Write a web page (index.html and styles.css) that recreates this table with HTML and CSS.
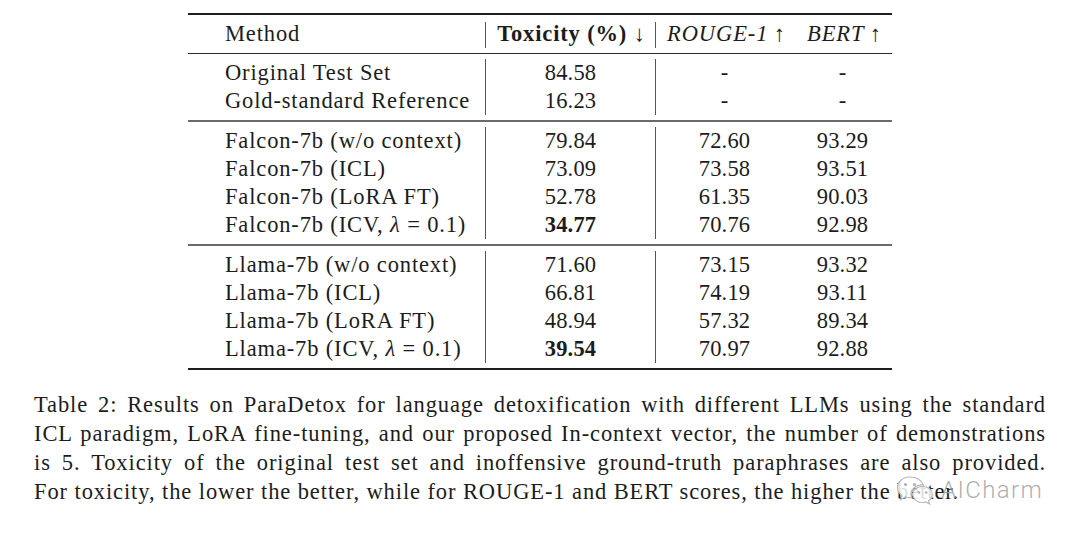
FILE: index.html
```html
<!DOCTYPE html>
<html>
<head>
<meta charset="utf-8">
<link rel="stylesheet" href="styles.css">
</head>
<body>
<div class="page">
  <div class="table">
    <div class="rule thick"></div>
    <div class="group head">
      <div class="row">
        <div class="c m">Method</div>
        <div class="c t"><b>Toxicity (%)</b>&nbsp;↓</div>
        <div class="c r"><i>ROUGE-1</i>&#8201;↑</div>
        <div class="c b"><i>BERT</i>&#8201;↑</div>
      </div>
    </div>
    <div class="rule thin"></div>
    <div class="group">
      <div class="row"><div class="c m">Original Test Set</div><div class="c t num">84.58</div><div class="c r num">-</div><div class="c b num">-</div></div>
      <div class="row"><div class="c m">Gold-standard Reference</div><div class="c t num">16.23</div><div class="c r num">-</div><div class="c b num">-</div></div>
    </div>
    <div class="rule mid"></div>
    <div class="group">
      <div class="row"><div class="c m">Falcon-7b (w/o context)</div><div class="c t num">79.84</div><div class="c r num">72.60</div><div class="c b num">93.29</div></div>
      <div class="row"><div class="c m">Falcon-7b (ICL)</div><div class="c t num">73.09</div><div class="c r num">73.58</div><div class="c b num">93.51</div></div>
      <div class="row"><div class="c m">Falcon-7b (LoRA FT)</div><div class="c t num">52.78</div><div class="c r num">61.35</div><div class="c b num">90.03</div></div>
      <div class="row"><div class="c m">Falcon-7b (ICV, <i class="lam">λ</i> = 0.1)</div><div class="c t num"><b>34.77</b></div><div class="c r num">70.76</div><div class="c b num">92.98</div></div>
    </div>
    <div class="rule mid"></div>
    <div class="group">
      <div class="row"><div class="c m">Llama-7b (w/o context)</div><div class="c t num">71.60</div><div class="c r num">73.15</div><div class="c b num">93.32</div></div>
      <div class="row"><div class="c m">Llama-7b (ICL)</div><div class="c t num">66.81</div><div class="c r num">74.19</div><div class="c b num">93.11</div></div>
      <div class="row"><div class="c m">Llama-7b (LoRA FT)</div><div class="c t num">48.94</div><div class="c r num">57.32</div><div class="c b num">89.34</div></div>
      <div class="row"><div class="c m">Llama-7b (ICV, <i class="lam">λ</i> = 0.1)</div><div class="c t num"><b>39.54</b></div><div class="c r num">70.97</div><div class="c b num">92.88</div></div>
    </div>
    <div class="rule thick"></div>
  </div>

  <div class="caption">
    <div class="line">Table 2: Results on ParaDetox for language detoxification with different LLMs using the standard</div>
    <div class="line">ICL paradigm, LoRA fine-tuning, and our proposed In-context vector, the number of demonstrations</div>
    <div class="line">is 5. Toxicity of the original test set and inoffensive ground-truth paraphrases are also provided.</div>
    <div class="line last">For toxicity, the lower the better, while for ROUGE-1 and BERT scores, the higher the better.</div>
    <div class="watermark">
      <svg class="wx" width="38" height="32" viewBox="0 0 38 32">
        <path d="M14 3 C6.5 3 1.5 8 1.5 13.5 C1.5 16.8 3.3 19.6 6 21.4 L4.8 25.5 L9.6 23 C11 23.5 12.5 23.7 14 23.7 C14.6 23.7 15.2 23.7 15.8 23.6 C15.4 22.6 15.2 21.5 15.2 20.4 C15.2 14.9 20.4 10.6 26.6 10.6 C26.8 10.6 27 10.6 27.2 10.6 C26 6.2 20.6 3 14 3 Z" />
        <path d="M26.6 12.3 C20.9 12.3 16.8 16 16.8 20.4 C16.8 24.8 20.9 28.5 26.6 28.5 C27.8 28.5 28.9 28.3 29.9 28 L33.6 30 L32.6 26.6 C34.8 25.1 36.3 22.9 36.3 20.4 C36.3 16 32.2 12.3 26.6 12.3 Z" />
        <circle class="eye" cx="9.5" cy="10.5" r="1.6"/>
        <circle class="eye" cx="18.5" cy="10.5" r="1.6"/>
        <circle class="eye" cx="23" cy="18.5" r="1.3"/>
        <circle class="eye" cx="30.2" cy="18.5" r="1.3"/>
      </svg>
      <span class="wm-text">AICharm</span>
    </div>
  </div>
</div>
</body>
</html>
```
FILE: styles.css
```css
html, body {
  margin: 0;
  padding: 0;
  background: #ffffff;
}

.page {
  width: 1080px;
  height: 537px;
  display: flex;
  flex-direction: column;
  align-items: center;
  font-family: "Liberation Serif", "Times New Roman", serif;
  color: #1c1c1c;
  font-size: 22.5px;
}

.table {
  width: 704px;
  margin-top: 13px;
  display: flex;
  flex-direction: column;
}

.rule { width: 100%; }
.rule.thick { height: 2px; background: #1e1e1e; }
.rule.thin { height: 1px; background: #2a2a2a; }
.rule.mid { height: 2px; background: #6a6a6a; }

.group {
  display: flex;
  flex-direction: column;
  padding: 5px 0 5px 0;
}
.group.head { padding: 7px 0 5px 0; }

.row {
  display: grid;
  grid-template-columns: 297px 170px 138px 99px;
  height: 28px;
  line-height: 28px;
}
.head .row { height: 26px; line-height: 24px; }

.c {
  white-space: nowrap;
  letter-spacing: 0.85px;
}
.c.m { padding-left: 37px; }
.c.t {
  text-align: center;
  border-left: 1.5px solid #555;
}
.c.r {
  text-align: center;
  border-left: 1.5px solid #555;
}
.c.b { text-align: center; }
.c.num { letter-spacing: 0.2px; }

.head .c.t { padding-left: 2px; }
.head .c.r { padding-left: 4px; letter-spacing: 0.9px; }
.head .c.b { padding-left: 4px; letter-spacing: 0.9px; }

.lam { font-style: italic; }

.caption {
  position: relative;
  width: 1012px;
  margin-top: 20px;
  line-height: 29px;
  letter-spacing: 0.9px;
}
.caption .line {
  text-align: justify;
  text-align-last: justify;
}
.caption .line.last {
  text-align: left;
  text-align-last: left;
}

.watermark {
  position: absolute;
  left: 862px;
  top: 84px;
  display: flex;
  align-items: center;
  gap: 7px;
}
.wx path {
  fill: rgba(255, 255, 255, 0.85);
  stroke: #b8b8b8;
  stroke-width: 1.2;
}
.wx .eye { fill: #b0b0b0; }
.wm-text {
  font-family: "Roboto", "Liberation Sans", sans-serif;
  font-weight: 300;
  font-size: 24px;
  letter-spacing: 1.4px;
  color: rgba(160, 160, 160, 0.85);
  line-height: 30px;
}
```
